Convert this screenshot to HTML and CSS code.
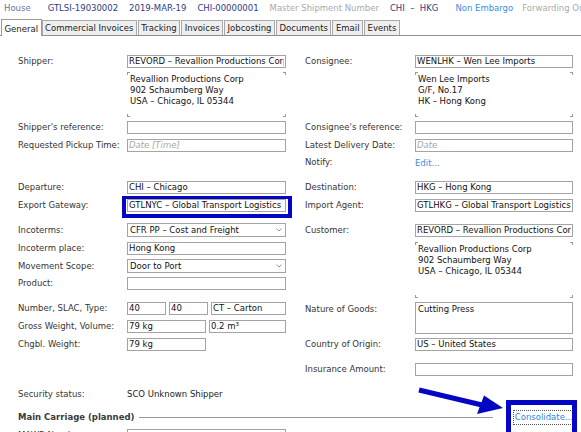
FILE: index.html
```html
<!DOCTYPE html>
<html lang="en">
<head>
    <meta charset="UTF-8">
    <meta name="viewport" content="width=device-width, initial-scale=1.0">
    <title>House Shipment - General</title>
    <link rel="stylesheet" href="styles.css">
</head>
<body>
    <div class="topbar">
        <span class="kind">House</span>
        <span class="ref">GTLSI-19030002</span>
        <span class="ref">2019-MAR-19</span>
        <span class="ref">CHI-00000001</span>
        <span class="muted">Master Shipment Number</span>
        <span class="ref route">CHI &nbsp;– &nbsp;HKG</span>
        <span class="embargo">Non Embargo</span>
        <span class="muted">Forwarding Order</span>
    </div>

    <div class="tabs">
        <div class="tab active">General</div>
        <div class="tab">Commercial Invoices</div>
        <div class="tab">Tracking</div>
        <div class="tab">Invoices</div>
        <div class="tab">Jobcosting</div>
        <div class="tab">Documents</div>
        <div class="tab">Email</div>
        <div class="tab">Events</div>
    </div>

    <div class="form">
        <!-- left column -->
        <div class="col col-left">
            <label>Shipper:</label>
            <input class="field" value="REVORD – Revallion Productions Corp">
            <span class="blank"></span>
            <textarea class="address">Revallion Productions Corp
902 Schaumberg Way
USA – Chicago, IL 05344</textarea>
            <label>Shipper's reference:</label>
            <input class="field" value="">
            <label>Requested Pickup Time:</label>
            <input class="field" placeholder="Date [Time]">
            <span class="blank short"></span>
            <span></span>

            <div class="sep"></div>

            <label>Departure:</label>
            <input class="field" value="CHI – Chicago">
            <label>Export Gateway:</label>
            <div class="marked">
                <input class="field" value="GTLNYC – Global Transport Logistics">
            </div>

            <div class="sep"></div>

            <label>Incoterms:</label>
            <div class="select">
                <span>CFR PP – Cost and Freight</span>
                <svg width="6" height="4" viewBox="0 0 6 4"><path d="M0.5 0.5 L3 3 L5.5 0.5" fill="none" stroke="#8a8a8a" stroke-width="0.9"/></svg>
            </div>
            <label>Incoterm place:</label>
            <input class="field" value="Hong Kong">
            <label>Movement Scope:</label>
            <div class="select">
                <span>Door to Port</span>
                <svg width="6" height="4" viewBox="0 0 6 4"><path d="M0.5 0.5 L3 3 L5.5 0.5" fill="none" stroke="#8a8a8a" stroke-width="0.9"/></svg>
            </div>
            <label class="short">Product:</label>
            <input class="field" value="">

            <div class="sep"></div>

            <label>Number, SLAC, Type:</label>
            <div class="multi">
                <input class="field num" value="40">
                <input class="field num" value="40">
                <input class="field" value="CT – Carton">
            </div>
            <label>Gross Weight, Volume:</label>
            <div class="multi">
                <input class="field half" value="79 kg">
                <input class="field" value="0.2 m³">
            </div>
            <label>Chgbl. Weight:</label>
            <div class="multi">
                <input class="field half" value="79 kg">
            </div>

            <div class="sep"></div>
            <span class="blank"></span>
            <span></span>
            <div class="sep"></div>

            <label>Security status:</label>
            <span class="value">SCO Unknown Shipper</span>
        </div>

        <!-- right column -->
        <div class="col col-right">
            <label>Consignee:</label>
            <input class="field" value="WENLHK – Wen Lee Imports">
            <span class="blank"></span>
            <textarea class="address">Wen Lee Imports
G/F, No.17
HK – Hong Kong</textarea>
            <label>Consignee's reference:</label>
            <input class="field" value="">
            <label>Latest Delivery Date:</label>
            <input class="field" placeholder="Date">
            <label class="short">Notify:</label>
            <a class="link" href="#">Edit...</a>

            <div class="sep"></div>

            <label>Destination:</label>
            <input class="field" value="HKG – Hong Kong">
            <label>Import Agent:</label>
            <input class="field" value="GTLHKG – Global Transport Logistics">

            <div class="sep"></div>

            <label>Customer:</label>
            <input class="field" value="REVORD – Revallion Productions Corp">
            <span class="blank"></span>
            <textarea class="address tall">Revallion Productions Corp
902 Schaumberg Way
USA – Chicago, IL 05344</textarea>

            <label class="top">Nature of Goods:</label>
            <textarea class="goods">Cutting Press</textarea>
            <label>Country of Origin:</label>
            <input class="field" value="US – United States">

            <div class="sep"></div>

            <label>Insurance Amount:</label>
            <input class="field" value="">
        </div>
    </div>

    <div class="carriage">
        <b>Main Carriage (planned)</b>
        <div class="carriage-line"></div>
        <a class="consolidate" href="#">Consolidate...</a>
        <svg class="pointer" width="96" height="34" viewBox="0 0 96 34">
            <line x1="5" y1="6" x2="68" y2="21" stroke="#0505c4" stroke-width="5"/>
            <polygon points="70,11.5 89,24 63,30" fill="#0505c4"/>
        </svg>
    </div>

    <div class="col col-left mawb">
        <label>MAWB Number:</label>
        <input class="field" value="">
    </div>
</body>
</html>
```
FILE: styles.css
```css
html, body {
    overflow: hidden;
}

body {
    font-family: "DejaVu Sans", Verdana, sans-serif;
    font-size: 8.5px;
    color: #363636;
    background-color: #fff;
    margin: 0;
    padding: 0;
}

/* header line */
.topbar {
    display: flex;
    gap: 11px;
    height: 17px;
    line-height: 17px;
    padding-left: 4px;
    white-space: nowrap;
}

.kind {
    color: #6178a6;
    margin-right: 6px;
}

.ref {
    color: #2c3d86;
}

.route {
    margin-right: 6px;
}

.muted {
    color: #aaaaaa;
}

.embargo {
    color: #3b8ee4;
    margin-right: -2px;
}

/* tabs */
.tabs {
    display: flex;
    align-items: flex-end;
    height: 16px;
    margin-top: 2px;
    border-bottom: 1px solid #8e8e8e;
    padding-left: 1px;
}

.tab {
    border: 1px solid #a9a9a9;
    border-bottom: none;
    background-color: #efefef;
    color: #222;
    padding: 1px 2.5px 0;
    line-height: 13px;
    margin-right: 1px;
    white-space: nowrap;
}

.tab.active {
    background-color: #fff;
    border-color: #9a9a9a;
    padding-top: 2px;
    line-height: 14px;
    margin-bottom: -1px;
    margin-right: 0;
}

/* form */
.form {
    display: flex;
    align-items: flex-start;
    gap: 19px;
    padding: 16px 8px 0 18px;
}

.col {
    display: grid;
    align-items: center;
    align-content: start;
}

.col-left {
    grid-template-columns: 109px 159px;
}

.col-right {
    grid-template-columns: 110px 158px;
}

.col label {
    line-height: 18px;
    white-space: nowrap;
}

.col label.short {
    line-height: 17px;
}

.col label.top {
    align-self: start;
    line-height: 20px;
}

.blank {
    height: 18px;
}

.blank.short {
    height: 17px;
}

.sep {
    grid-column: 1 / -1;
    height: 7px;
}

.field {
    box-sizing: border-box;
    width: 100%;
    height: 13px;
    border: 1px solid #a4a4a4;
    padding: 0 1px;
    margin: 0;
    font-family: inherit;
    font-size: inherit;
    color: #111;
    background-color: #fff;
    outline: none;
}

.field::placeholder {
    color: #a8a8a8;
    font-style: italic;
}

.marked {
    position: relative;
}

.marked::after {
    content: "";
    position: absolute;
    top: -3px;
    left: -5px;
    right: -6px;
    bottom: -6px;
    border: 4px solid #0505c4;
    border-top-width: 3px;
    pointer-events: none;
}

.address {
    box-sizing: border-box;
    width: 100%;
    height: 45px;
    margin: 2px 0 1px;
    padding: 2px 3px;
    border: none;
    resize: none;
    overflow: hidden;
    font-family: inherit;
    font-size: inherit;
    line-height: 10.8px;
    color: #111;
    outline: none;
    /* little corner ticks instead of a border */
    background:
        linear-gradient(#9a9a9a, #9a9a9a) left top / 1px 3px no-repeat,
        linear-gradient(#9a9a9a, #9a9a9a) left top / 3px 1px no-repeat,
        linear-gradient(#9a9a9a, #9a9a9a) right top / 1px 3px no-repeat,
        linear-gradient(#9a9a9a, #9a9a9a) right top / 3px 1px no-repeat,
        linear-gradient(#9a9a9a, #9a9a9a) left bottom / 1px 3px no-repeat,
        linear-gradient(#9a9a9a, #9a9a9a) left bottom / 3px 1px no-repeat,
        linear-gradient(#9a9a9a, #9a9a9a) right bottom / 1px 3px no-repeat,
        linear-gradient(#9a9a9a, #9a9a9a) right bottom / 3px 1px no-repeat;
}

.address.tall {
    height: 56px;
    margin: 3px 0 1px;
}

.goods {
    box-sizing: border-box;
    width: 100%;
    height: 32px;
    margin: 3px 0 1px;
    padding: 1px 2px;
    border: 1px solid #a4a4a4;
    resize: none;
    overflow: hidden;
    font-family: inherit;
    font-size: inherit;
    line-height: 11px;
    color: #111;
    outline: none;
}

.select {
    box-sizing: border-box;
    height: 14px;
    border: 1px solid #a4a4a4;
    padding: 0 3px 0 2px;
    display: flex;
    align-items: center;
    justify-content: space-between;
    color: #111;
    white-space: nowrap;
}

.multi {
    display: flex;
    gap: 3px;
}

.multi .num {
    width: 39px;
    flex: none;
}

.multi .half {
    width: 79px;
    flex: none;
}

.multi .field:not(.num):not(.half) {
    flex: 1;
    min-width: 0;
}

.value {
    color: #222;
}

.link {
    color: #3b8ee4;
    text-decoration: none;
}

/* main carriage */
.carriage {
    position: relative;
    display: flex;
    align-items: center;
    height: 18px;
    margin-top: 5px;
    padding: 0 8px 0 18px;
}

.carriage b {
    color: #3a3a3a;
    white-space: nowrap;
}

.carriage-line {
    flex: 1;
    height: 1px;
    background-color: #999;
    margin-left: 5px;
}

.consolidate {
    position: relative;
    margin-left: 22px;
    color: #2f86e0;
    text-decoration: none;
    line-height: 11px;
    outline: 1px dotted #555;
    outline-offset: 1px;
}

.consolidate::before {
    content: "";
    position: absolute;
    top: -12px;
    left: -9px;
    right: -4px;
    bottom: -14px;
    border: 5px solid #0505c4;
}

.pointer {
    position: absolute;
    left: 414px;
    top: -24px;
}

.mawb {
    padding-left: 18px;
}
```
